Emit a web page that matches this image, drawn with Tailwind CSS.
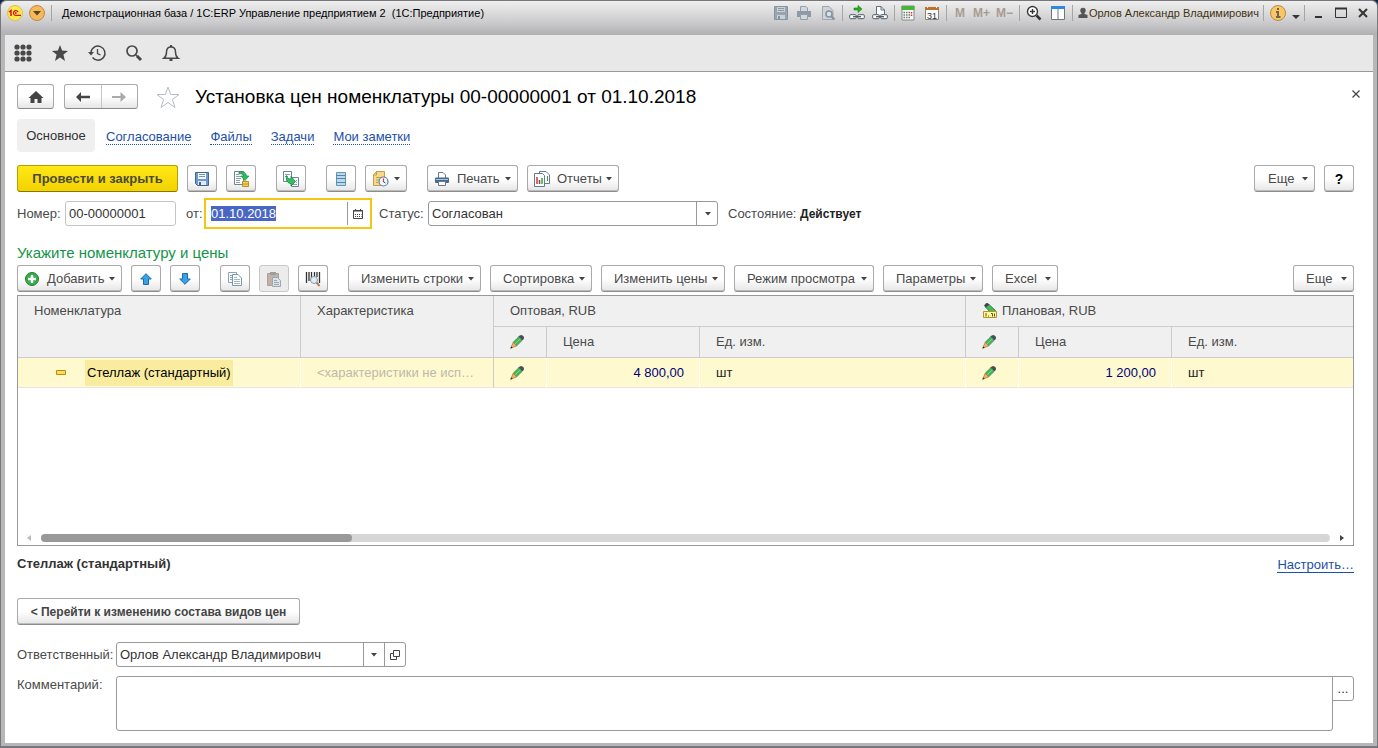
<!DOCTYPE html>
<html lang="ru">
<head>
<meta charset="utf-8">
<title>Установка цен номенклатуры</title>
<script src="https://cdn.jsdelivr.net/npm/@tailwindcss/browser@4"></script>
</head>
<body class="bg-[#0c2850] font-['Liberation_Sans',Arial,sans-serif] text-[13px] leading-4 text-[#4a4a4a]">

<svg class="hidden" aria-hidden="true">
  <symbol id="caret" viewBox="0 0 6 4"><path d="M0 0h6L3 3.5z" fill="#444"/></symbol>
  <symbol id="pencil" viewBox="0 0 14 14">
    <path d="M3.200 7.300 9 1.500 12.500 5 6.700 10.800z" fill="#45b85a" stroke="#2f7a40" stroke-width=".7"/>
    <path d="m5 9 5.800-5.800" stroke="#7fd68d" stroke-width="1"/>
    <path d="M9 1.500 10.300.4h1.800l1.500 1.500v1.800L12.500 5z" fill="#474d5c" stroke="#333845" stroke-width=".6"/>
    <path d="M3.200 7.300 6.700 10.800 1.500 13 1 12.500z" fill="#f2b565" stroke="#a06c34" stroke-width=".7"/>
    <path d="M.3 13.700 1.200 11.400 2.600 12.800z" fill="#222"/>
  </symbol>
</svg>

<div class="flex min-h-screen flex-col rounded-t-md border border-b-2 border-[#77777c] bg-[#b7b7ba]">

  <!-- Window title bar -->
  <header class="flex h-[34px] items-start rounded-t-md bg-linear-to-b from-[#efefef] via-[#cdcdcf] via-60% to-[#b0b0b2] pl-1.5 pr-2 text-[11px] text-black">
    <div class="flex h-6 w-full items-center">
      <svg class="size-4 shrink-0" viewBox="0 0 16 16"><circle cx="8" cy="8" r="7.500" fill="#ffe94d" stroke="#dfbd55"/><path d="M2 7 4 5.500V11" fill="none" stroke="#d8131c" stroke-width="1.500"/><path d="M11 7A2.400 2.400 0 1 0 8.700 10.400H14" fill="none" stroke="#d8131c" stroke-width="1.300"/><circle cx="8.800" cy="8" r=".9" fill="#d8131c"/></svg>
      <button class="ml-1.5 shrink-0" aria-label="Главное меню"><svg class="size-4" viewBox="0 0 16 16"><circle cx="8" cy="8" r="7.500" fill="#f6b95a" stroke="#b98a48"/><path d="M4 6h8L8 10.500z" fill="#5a4526"/></svg></button>
      <span class="ml-1.5 h-4 w-px bg-[#a5a5a5]"></span>
      <h1 class="ml-2.5 whitespace-pre">Демонстрационная база / 1С:ERP Управление предприятием 2  (1С:Предприятие)</h1>

      <div class="ml-auto flex shrink-0 items-center">
        <button aria-label="Сохранить"><svg class="size-4" viewBox="0 0 16 16"><path d="M1.500 1.500h13v13h-13z" fill="#98a5b0" stroke="#8794a0"/><path d="M4 2h8v5H4zM4 10h8v4H4z" fill="#c9d0d6"/><path d="M5 3.500h6M5 5.500h6" stroke="#8d9aa5"/><path d="M5 11h2v3H5z" fill="#8392a0"/></svg></button>
        <button class="ml-[7px]" aria-label="Печать"><svg class="size-4" viewBox="0 0 16 16"><path d="M4.500 6V1.500H10L11.500 3v3" fill="#d5d8db" stroke="#93a0ab"/><path d="M1 6h14v6H1z" fill="#8b9aa6"/><path d="M4.500 9.500h7v5h-7z" fill="#d5d8db" stroke="#93a0ab"/></svg></button>
        <button class="ml-2" aria-label="Предварительный просмотр"><svg class="size-4" viewBox="0 0 16 16"><path d="M2.500 1.500H9l4 4v9H2.500z" fill="#cfd3d7" stroke="#9ca7b0"/><circle cx="9" cy="9" r="3" fill="#dbe2e7" stroke="#8492a0" stroke-width="1.500"/><path d="m11 11 3.500 3.500" stroke="#8492a0" stroke-width="2"/></svg></button>
        <span class="ml-1.5 h-4 w-px bg-[#a5a5a5]"></span>
        <button class="ml-1.5" aria-label="Получить ссылку"><svg class="size-4" viewBox="0 0 16 16"><path d="M5 3h4V.5L13 4 9 7.500V5H5z" fill="#27b01c" stroke="#178010" stroke-width=".6"/><rect x=".7" y="9.700" width="6.500" height="4" rx="1" fill="#fff" stroke="#4c5966"/><rect x="8.800" y="9.700" width="6.500" height="4" rx="1" fill="#fff" stroke="#4c5966"/><path d="M4 11.700h8" stroke="#4c5966" stroke-width="1.300"/></svg></button>
        <button class="ml-[7px]" aria-label="Перейти по ссылке"><svg class="size-4" viewBox="0 0 16 16"><path d="M4.500 9V1.500H9L12.500 5v4" fill="#fff" stroke="#5c6f80"/><path d="M9 1.500V5h3.500" fill="none" stroke="#5c6f80"/><rect x=".7" y="9.700" width="6.500" height="4" rx="1" fill="#fff" stroke="#4c5966"/><rect x="8.800" y="9.700" width="6.500" height="4" rx="1" fill="#fff" stroke="#4c5966"/><path d="M4 11.700h8" stroke="#4c5966" stroke-width="1.300"/></svg></button>
        <span class="ml-1.5 h-4 w-px bg-[#a5a5a5]"></span>
        <button class="ml-[5px]" aria-label="Калькулятор"><svg class="size-4" viewBox="0 0 16 16"><path d="M2 1h12v14H2z" fill="#f8f8f8" stroke="#888"/><path d="M1.500 1h13v4h-13z" fill="#48b53a"/><path d="M3.500 7.500h7M3.500 10h7M3.500 12.500h7" stroke="#66806a" stroke-width="1.500" stroke-dasharray="1.500 1"/><path d="M11.500 7v1.500m0 1V11" stroke="#e03030" stroke-width="1.500"/></svg></button>
        <button class="ml-2" aria-label="Календарь"><svg class="size-4" viewBox="0 0 16 16"><path d="M1.500 2.500h13v12h-13z" fill="#fbfbfb" stroke="#8c8880"/><path d="M1 2h14v3H1z" fill="#b9742f"/><path d="M3.500 1v2m9-2v2" stroke="#eee"/><text x="8" y="13.500" text-anchor="middle" font-family="Liberation Sans" font-size="9" fill="#333">31</text></svg></button>
        <span class="ml-1.5 h-4 w-px bg-[#a5a5a5]"></span>
        <button class="ml-2 text-xs font-bold text-[#a89c90]">M</button>
        <button class="ml-2 text-xs font-bold text-[#a89c90]">M+</button>
        <button class="ml-1.5 text-xs font-bold text-[#a89c90]">M−</button>
        <span class="ml-1.5 h-4 w-px bg-[#a5a5a5]"></span>
        <button class="ml-1.5" aria-label="Масштаб"><svg class="size-4" viewBox="0 0 16 16"><circle cx="6.500" cy="6.500" r="5" fill="#fff" stroke="#3b3b3b" stroke-width="1.400"/><path d="M6.500 4v5M4 6.500h5" stroke="#333" stroke-width="1.300"/><path d="m10.500 10.500 4 4" stroke="#333" stroke-width="2.500"/></svg></button>
        <button class="ml-2" aria-label="Панели"><svg class="size-4" viewBox="0 0 16 16"><path d="M1.500 1.500h13v13h-13zM8 3v11" fill="#fff" stroke="#6d7680"/><path d="M1 1h14v3H1z" fill="#2d8ae0"/></svg></button>
        <span class="ml-1.5 h-4 w-px bg-[#a5a5a5]"></span>
        <button class="ml-1 flex items-center text-[#3f330f]"><svg class="size-3" viewBox="0 0 12 12"><circle cx="6" cy="3.500" r="2.700" fill="#555"/><path d="M4.500 5h3v2l3 1v3h-9V8l3-1z" fill="#555"/></svg>Орлов Александр Владимирович</button>
        <span class="ml-1 h-4 w-px bg-[#a5a5a5]"></span>
        <button class="ml-1.5" aria-label="Справка"><svg class="size-4" viewBox="0 0 16 16"><circle cx="8" cy="8" r="7.500" fill="#fbc765" stroke="#b98a48"/><path d="M8 3v2M6 7h2v5m-2 0h4.500" fill="none" stroke="#6c6658" stroke-width="2"/></svg></button>
        <button class="mt-2 ml-1.5" aria-label="Ещё"><svg class="h-1 w-2" viewBox="0 0 8 4"><path d="M0 0h8L4 4z" fill="#333"/></svg></button>
        <span class="ml-1 h-4 w-px bg-[#a5a5a5]"></span>
        <button class="ml-2" aria-label="Свернуть"><svg class="size-3" viewBox="0 0 12 12"><path d="M2 10h7" stroke="#333" stroke-width="2"/></svg></button>
        <button class="ml-2.5" aria-label="Развернуть"><svg class="size-3" viewBox="0 0 12 12"><path d="M.5 1.500h11v9H.5z" fill="none" stroke="#333"/><path d="M0 1.500h12" stroke="#333" stroke-width="2"/></svg></button>
        <button class="ml-2.5" aria-label="Закрыть"><svg class="size-3" viewBox="0 0 12 12"><path d="m2 2 8 8m0-8-8 8" stroke="#333" stroke-width="2"/></svg></button>
      </div>
    </div>
  </header>

  <div class="mx-1 mb-[3px] flex flex-1 flex-col bg-white">
    <!-- Tools panel -->
    <nav class="flex h-[37px] items-center gap-[17px] border-b border-[#999] bg-[#e8e8e8] pl-2 text-[#484848]">
      <button aria-label="Меню"><svg class="size-5" viewBox="0 0 20 20" fill="currentColor"><circle cx="4" cy="4" r="2.600"/><circle cx="10" cy="4" r="2.600"/><circle cx="16" cy="4" r="2.600"/><circle cx="4" cy="10" r="2.600"/><circle cx="10" cy="10" r="2.600"/><circle cx="16" cy="10" r="2.600"/><circle cx="4" cy="16" r="2.600"/><circle cx="10" cy="16" r="2.600"/><circle cx="16" cy="16" r="2.600"/></svg></button>
      <button aria-label="Избранное"><svg class="size-5" viewBox="0 0 20 20"><path d="m10 2 2.100 5.600 6 .3-4.700 3.700L15 18l-5-3.400L5 18l1.600-6.400L1.900 7.900l6-.3z" fill="currentColor"/></svg></button>
      <button aria-label="История"><svg class="size-5" viewBox="0 0 20 20" fill="none" stroke="currentColor"><path d="M4 9.500a7 7 0 1 1 1.500 5" stroke-width="1.500"/><path d="M1 9h6l-3 3.500z" fill="currentColor" stroke="none"/><path d="M10.500 6v4.500l3 1.500" stroke-width="1.300"/></svg></button>
      <button aria-label="Поиск"><svg class="size-5" viewBox="0 0 20 20" fill="none" stroke="currentColor"><circle cx="8" cy="8" r="5" stroke-width="1.700"/><path d="m12 12 1.500 1.500" stroke-width="1.500"/><path d="m13 13 4 4" stroke-width="3"/></svg></button>
      <button aria-label="Оповещения"><svg class="size-5" viewBox="0 0 20 20" fill="none" stroke="currentColor" stroke-width="1.500"><path d="M3 15.200c2-1.400 2.500-3 2.500-6.200C5.500 6 7 4 10 4s4.500 2 4.500 5c0 3.200.5 4.800 2.500 6.200z"/><path d="M10 2v2M8.500 17h3" stroke-width="2"/></svg></button>
    </nav>

    <main class="flex flex-1 flex-col pl-3 pr-[19px] pb-3">
      <!-- Form title -->
      <div class="mt-3 flex h-[25px] items-center">
        <button class="flex h-[25px] w-[37px] items-center justify-center rounded-[3px] border border-[#aaa] border-b-[#8a8a8a] bg-linear-to-b from-white from-50% to-[#e6e6e6]" aria-label="Домой"><svg class="h-3 w-4" viewBox="0 0 16 12"><path d="M8 0 15.500 7H13.500v5H9.500V8H6.500v4H2.500V7H.5z" fill="#444"/></svg></button>
        <div class="ml-2.5 flex h-[25px] w-[74px] rounded-[3px] border border-[#aaa] border-b-[#8a8a8a] bg-linear-to-b from-white from-50% to-[#e6e6e6]">
          <button class="flex flex-1 items-center justify-center border-r border-[#c4c4c4]" aria-label="Назад"><svg class="h-2.5 w-4" viewBox="0 0 16 10"><path d="M1 5 6 0v3.700h9v2.600H6V10z" fill="#444"/></svg></button>
          <button class="flex flex-1 items-center justify-center" aria-label="Вперёд"><svg class="h-2.5 w-4" viewBox="0 0 16 10"><path d="M15 5 9.500 0v4H1v2h8.500v4z" fill="#aaa"/></svg></button>
        </div>
        <button class="ml-[18px]" aria-label="В избранное"><svg class="size-6" viewBox="0 0 24 24"><path d="m12 2 2.700 7.500h8.300l-6.600 5L19 22.500l-7-5-7 5 2.600-8L1 9.500h8.300z" fill="#fff" stroke="#b5bcc2"/></svg></button>
        <h2 class="ml-[15px] text-[19px] leading-6 text-black">Установка цен номенклатуры 00-00000001 от 01.10.2018</h2>
        <button class="mr-[-8px] mb-1.5 ml-auto" aria-label="Закрыть форму"><svg class="size-3" viewBox="0 0 12 12"><path d="m2.500 2.500 7 7m0-7-7 7" stroke="#444" stroke-width="1.200"/></svg></button>
      </div>

      <!-- Sections -->
      <nav class="mt-2.5 flex h-[33px] items-center gap-[19px]">
        <a href="#" class="-mr-2 flex h-[33px] w-[78px] items-center justify-center rounded bg-[#efefef] pt-px text-[#333]">Основное</a>
        <a href="#" class="mt-0.5 border-b border-dotted border-[#1d4fa8] leading-[15px] text-[#1d4fa8]">Согласование</a>
        <a href="#" class="mt-0.5 border-b border-dotted border-[#1d4fa8] leading-[15px] text-[#1d4fa8]">Файлы</a>
        <a href="#" class="mt-0.5 border-b border-dotted border-[#1d4fa8] leading-[15px] text-[#1d4fa8]">Задачи</a>
        <a href="#" class="mt-0.5 border-b border-dotted border-[#1d4fa8] leading-[15px] text-[#1d4fa8]">Мои заметки</a>
      </nav>

      <!-- Document commands -->
      <div class="mt-[13px] flex h-[27px] items-stretch gap-[9px] *:shrink-0">
        <button class="w-[161px] rounded-[3px] border border-[#b5a000] border-b-[#857600] bg-linear-to-b from-[#ffe815] to-[#f2d200] font-bold text-[#4a4a3a]">Провести и закрыть</button>
        <button class="flex w-[30px] items-center justify-center rounded-[3px] border border-[#aaa] border-b-[#8c8c8c] bg-linear-to-b from-white from-50% to-[#e6e6e6] shadow-[inset_0_-1px_0_#bcbcbc]" aria-label="Записать"><svg class="size-4" viewBox="0 0 16 16"><path d="M1.500 1.500h13v13h-11l-2-2z" fill="#6b9bd0" stroke="#43648c"/><path d="M4 2h8v6H4z" fill="#f4f8fc"/><path d="M5 3.500h6M5 5.500h6" stroke="#7f93ab"/><path d="M4 10h8v4H4z" fill="#e6e9ee"/><path d="M5 11h2v3H5z" fill="#43648c"/></svg></button>
        <button class="flex w-[30px] items-center justify-center rounded-[3px] border border-[#aaa] border-b-[#8c8c8c] bg-linear-to-b from-white from-50% to-[#e6e6e6] shadow-[inset_0_-1px_0_#bcbcbc]" aria-label="Провести"><svg class="size-[18px]" viewBox="0 0 18 18"><path d="M2.500 1.500h9v13h-9z" fill="#fff" stroke="#6d8597"/><path d="M4 4.500h3m-3 2h5m-5 2h5m-5 2h4m-4 2h4" stroke="#88a0b0"/><path d="M7 2c4-1 7 0 7.500 4H17l-4 4.500L9 6h2.500C11 4 9.500 3.500 7 4z" fill="#2fb960" stroke="#1a8a42" stroke-width=".7"/><path d="M10.500 11.500h6v5h-6z" fill="#f6d34c" stroke="#b8902a"/><path d="M10.500 14h6" stroke="#b8902a"/></svg></button>
        <button class="ml-[11px] flex w-[30px] items-center justify-center rounded-[3px] border border-[#aaa] border-b-[#8c8c8c] bg-linear-to-b from-white from-50% to-[#e6e6e6] shadow-[inset_0_-1px_0_#bcbcbc]" aria-label="Создать на основании"><svg class="size-[18px]" viewBox="0 0 18 18"><path d="M1.500 1.500h8v10h-8zM9.500 7.500h7v9h-7z" fill="#fff" stroke="#6d8597"/><path d="M3 4.500h5m-5 2h3m8 4h1m-1 2h1m-4 2h4" stroke="#88a0b0"/><path d="M4.500 5.500c.5 2.500 2 3.500 4.500 3.500V6.500l4.500 5-4.500 4.500v-2.500C5.500 13.500 3.500 10 4.500 5.500z" fill="#2fc068" stroke="#15853e" stroke-width=".8"/></svg></button>
        <button class="ml-[11px] flex w-[30px] items-center justify-center rounded-[3px] border border-[#aaa] border-b-[#8c8c8c] bg-linear-to-b from-white from-50% to-[#e6e6e6] shadow-[inset_0_-1px_0_#bcbcbc]" aria-label="Список"><svg class="size-4" viewBox="0 0 16 16"><path d="M3.500 1.500h9v13h-9z" fill="#b9d9ec" stroke="#6694b4"/><path d="M3 4.500h10M3 7.500h10M3 11.500h10" stroke="#5585a8"/></svg></button>
        <button class="flex w-[42px] items-center rounded-[3px] border border-[#aaa] border-b-[#8c8c8c] bg-linear-to-b from-white from-50% to-[#e6e6e6] px-1.5 shadow-[inset_0_-1px_0_#bcbcbc]" aria-label="Напоминание"><svg class="size-[18px]" viewBox="0 0 18 18"><path d="M4.500 1.500h8v14h-11V5z" fill="#f7d98c" stroke="#c69c48"/><path d="M1.500 5h3V1.500M4 7.500h5M4 10h3M4 12.500h2" fill="none" stroke="#c69c48"/><circle cx="11.500" cy="11.500" r="4.500" fill="#f4f8fc" stroke="#5a7fa8" stroke-width="1.200"/><path d="M11.500 8.500v3.500" stroke="#d33" stroke-width="1.200"/><path d="m11.500 12 2 1" stroke="#456"/></svg><svg class="ml-auto h-1 w-1.5"><use href="#caret"/></svg></button>
        <button class="ml-[11px] flex w-[91px] items-center rounded-[3px] border border-[#aaa] border-b-[#8c8c8c] bg-linear-to-b from-white from-50% to-[#e6e6e6] px-1.5 shadow-[inset_0_-1px_0_#bcbcbc]"><svg class="mr-[7px] size-4" viewBox="0 0 16 16"><path d="M4.500 7V1.500H9L11.500 4v3" fill="#fff" stroke="#68798a"/><rect x="1" y="6.500" width="14" height="5.500" rx="1" fill="#47698c"/><path d="M2 8.500h12" stroke="#a8c4de"/><path d="M4.500 10.500h7v4h-7z" fill="#fff" stroke="#68798a"/></svg>Печать<svg class="ml-auto h-1 w-1.5"><use href="#caret"/></svg></button>
        <button class="flex w-[92px] items-center rounded-[3px] border border-[#aaa] border-b-[#8c8c8c] bg-linear-to-b from-white from-50% to-[#e6e6e6] px-1.5 shadow-[inset_0_-1px_0_#bcbcbc]"><svg class="mr-[7px] size-4" viewBox="0 0 16 16"><path d="M5.500.5H12L15.500 4v8.500h-10z" fill="#fff" stroke="#68798a"/><path d="M13.500 5v5" stroke="#3a9d3a"/><path d="M.5 2.500h8l2 2v11H.5z" fill="#fff" stroke="#68798a"/><path d="M3 6v7" stroke="#d33" stroke-width="1.500"/><path d="M5.500 9v4" stroke="#555" stroke-width="1.500"/><path d="M8 7v6" stroke="#39a339" stroke-width="1.500"/></svg>Отчеты<svg class="ml-auto h-1 w-1.5"><use href="#caret"/></svg></button>
        <button class="ml-auto flex w-[61px] items-center rounded-[3px] border border-[#aaa] border-b-[#8c8c8c] bg-linear-to-b from-white from-50% to-[#e6e6e6] pl-[13px] pr-1.5 shadow-[inset_0_-1px_0_#bcbcbc]">Еще<svg class="ml-auto h-1 w-1.5"><use href="#caret"/></svg></button>
        <button class="w-[30px] rounded-[3px] border border-[#aaa] border-b-[#8c8c8c] bg-linear-to-b from-white from-50% to-[#e6e6e6] text-sm font-bold text-black shadow-[inset_0_-1px_0_#bcbcbc]">?</button>
      </div>

      <!-- Document header fields -->
      <div class="mt-[6px] flex h-[31px] items-center">
        <label for="number" class="w-12">Номер:</label>
        <input id="number" value="00-00000001" class="h-[25px] w-[111px] rounded-[3px] border border-[#c4c4c4] px-[3px] text-[#333]">
        <label for="date" class="ml-2.5 w-[18px]">от:</label>
        <div class="flex h-[31px] w-[168px] items-center border-2 border-[#f3c614] bg-white">
          <input id="date" value="01.10.2018" autofocus class="h-[25px] w-0 flex-1 pl-[5px] text-[#333] outline-none selection:bg-[#4a66c4] selection:text-white">
          <button class="flex h-[23px] w-[23px] items-center justify-center border-l border-[#999] pr-[3px]" aria-label="Выбрать дату"><svg class="size-[10px]" viewBox="0 0 10 10"><path d="M.5 1.500h9v8h-9z" fill="#fff" stroke="#444"/><path d="M0 2h10M2.500 0v2m5-2v2" stroke="#444"/><path d="M2 5.500h6.500M2 7.500h6.500" stroke="#444" stroke-dasharray="1 1"/></svg></button>
        </div>
        <label for="status" class="ml-[7px] w-[49px]">Статус:</label>
        <div class="relative flex w-[290px]">
          <select id="status" class="h-[25px] w-full appearance-none rounded-[3px] border border-[#999] bg-white px-[3px] text-[#333]"><option>Согласован</option></select>
          <span class="pointer-events-none absolute inset-y-0 right-0 flex w-[22px] items-center justify-center border-l border-[#999]"><svg class="h-1 w-1.5"><use href="#caret"/></svg></span>
        </div>
        <span class="ml-2.5 w-[72px]">Состояние:</span>
        <span class="text-xs font-bold text-[#222]">Действует</span>
      </div>

      <h3 class="mt-[14px] text-[15px] leading-5 text-[#159447]">Укажите номенклатуру и цены</h3>

      <!-- Table commands -->
      <div class="mt-0.5 flex h-[27px] items-stretch gap-[9px] *:shrink-0">
        <button class="flex w-[105px] items-center rounded-[3px] border border-[#aaa] border-b-[#8c8c8c] bg-linear-to-b from-white from-50% to-[#e6e6e6] px-1.5 shadow-[inset_0_-1px_0_#bcbcbc]"><svg class="mr-[7px] size-4" viewBox="0 0 16 16"><circle cx="8" cy="8" r="6.500" fill="#35ae49" stroke="#1f7d32"/><path d="M8 4v8M4 8h8" stroke="#fff" stroke-width="2.400"/></svg>Добавить<svg class="ml-auto h-1 w-1.5"><use href="#caret"/></svg></button>
        <button class="flex w-[30px] items-center justify-center rounded-[3px] border border-[#aaa] border-b-[#8c8c8c] bg-linear-to-b from-white from-50% to-[#e6e6e6] shadow-[inset_0_-1px_0_#bcbcbc]" aria-label="Вверх"><svg class="size-3" viewBox="0 0 12 12"><path d="M6 .7 11.300 6H8.500v5.500h-5V6H.7z" fill="#37a0e6" stroke="#1c6ca8"/></svg></button>
        <button class="flex w-[30px] items-center justify-center rounded-[3px] border border-[#aaa] border-b-[#8c8c8c] bg-linear-to-b from-white from-50% to-[#e6e6e6] shadow-[inset_0_-1px_0_#bcbcbc]" aria-label="Вниз"><svg class="size-3" viewBox="0 0 12 12"><path d="M6 11.300.7 6h2.800V.5h5V6h2.800z" fill="#37a0e6" stroke="#1c6ca8"/></svg></button>
        <button class="ml-[11px] flex w-[30px] items-center justify-center rounded-[3px] border border-[#aaa] border-b-[#8c8c8c] bg-linear-to-b from-white from-50% to-[#e6e6e6] shadow-[inset_0_-1px_0_#bcbcbc]" aria-label="Копировать"><svg class="size-4" viewBox="0 0 16 16"><path d="M1.500 1.500h8v10h-8z" fill="#fff" stroke="#8aa5ba"/><path d="M3 4.500h2m-2 2h2m-2 2h2" stroke="#8aa5ba"/><path d="M5.500 3.500H11L14.500 7v7.500h-9z" fill="#fff" stroke="#7896ae"/><path d="M7 6.500h3m-3 2h6m-6 2h6m-6 2h6" stroke="#9fb6c8"/></svg></button>
        <button class="flex w-[30px] items-center justify-center rounded-[3px] border border-[#c8c8c8] bg-[#ececec]" aria-label="Вставить"><svg class="size-4" viewBox="0 0 16 16"><path d="M1.500 2.500h11v12h-11z" fill="#c3b2a4" stroke="#ada094"/><path d="M4 1h6v3H4z" fill="#9a9da1"/><path d="M6.500 6.500h5l3 3v6h-8z" fill="#dde3e8" stroke="#9aa8b4"/><path d="M8 9.500h3m-3 2h5m-5 2h5" stroke="#9aa8b4"/></svg></button>
        <button class="flex w-[30px] items-center justify-center rounded-[3px] border border-[#aaa] border-b-[#8c8c8c] bg-linear-to-b from-white from-50% to-[#e6e6e6] shadow-[inset_0_-1px_0_#bcbcbc]" aria-label="Поиск по штрихкоду"><svg class="size-4" viewBox="0 0 16 16"><path d="M1.500 1v11M4 1v9M6.500 1v9M9.500 1v5M12 1v5M14.500 1v11" stroke="#333" stroke-width="1.300"/><circle cx="9" cy="9" r="3.500" fill="#dcecf8" stroke="#8d99a5"/><path d="m11.500 11.500 3 3.500" stroke="#b5805a" stroke-width="2"/></svg></button>
        <button class="ml-[11px] flex w-[133px] items-center rounded-[3px] border border-[#aaa] border-b-[#8c8c8c] bg-linear-to-b from-white from-50% to-[#e6e6e6] pl-3 pr-1.5 shadow-[inset_0_-1px_0_#bcbcbc]">Изменить строки<svg class="ml-auto h-1 w-1.5"><use href="#caret"/></svg></button>
        <button class="flex w-[102px] items-center rounded-[3px] border border-[#aaa] border-b-[#8c8c8c] bg-linear-to-b from-white from-50% to-[#e6e6e6] pl-3 pr-1.5 shadow-[inset_0_-1px_0_#bcbcbc]">Сортировка<svg class="ml-auto h-1 w-1.5"><use href="#caret"/></svg></button>
        <button class="flex w-[124px] items-center rounded-[3px] border border-[#aaa] border-b-[#8c8c8c] bg-linear-to-b from-white from-50% to-[#e6e6e6] pl-3 pr-1.5 shadow-[inset_0_-1px_0_#bcbcbc]">Изменить цены<svg class="ml-auto h-1 w-1.5"><use href="#caret"/></svg></button>
        <button class="flex w-[140px] items-center rounded-[3px] border border-[#aaa] border-b-[#8c8c8c] bg-linear-to-b from-white from-50% to-[#e6e6e6] pl-3 pr-1.5 shadow-[inset_0_-1px_0_#bcbcbc]">Режим просмотра<svg class="ml-auto h-1 w-1.5"><use href="#caret"/></svg></button>
        <button class="flex w-[100px] items-center rounded-[3px] border border-[#aaa] border-b-[#8c8c8c] bg-linear-to-b from-white from-50% to-[#e6e6e6] pl-3 pr-1.5 shadow-[inset_0_-1px_0_#bcbcbc]">Параметры<svg class="ml-auto h-1 w-1.5"><use href="#caret"/></svg></button>
        <button class="flex w-[66px] items-center rounded-[3px] border border-[#aaa] border-b-[#8c8c8c] bg-linear-to-b from-white from-50% to-[#e6e6e6] pl-3 pr-1.5 shadow-[inset_0_-1px_0_#bcbcbc]">Excel<svg class="ml-auto h-1 w-1.5"><use href="#caret"/></svg></button>
        <button class="ml-auto flex w-[61px] items-center rounded-[3px] border border-[#aaa] border-b-[#8c8c8c] bg-linear-to-b from-white from-50% to-[#e6e6e6] pl-3 pr-1.5 shadow-[inset_0_-1px_0_#bcbcbc]">Еще<svg class="ml-auto h-1 w-1.5"><use href="#caret"/></svg></button>
      </div>

      <!-- Price table -->
      <div class="mt-[3px] flex min-h-[251px] flex-1 flex-col border border-[#999]">
        <table class="w-full table-fixed border-separate border-spacing-0 text-left">
          <colgroup><col class="w-[283px]"><col class="w-[193px]"><col class="w-[53px]"><col class="w-[153px]"><col class="w-[266px]"><col class="w-[53px]"><col class="w-[153px]"><col></colgroup>
          <thead class="bg-[#f0f0f0] *:*:border-b *:*:border-[#ccc] *:*:font-normal">
            <tr class="h-[31px]">
              <th rowspan="2" class="border-r px-4 pt-[7px] align-top">Номенклатура</th>
              <th rowspan="2" class="border-r px-4 pt-[7px] align-top">Характеристика</th>
              <th colspan="3" class="border-r px-4">Оптовая, RUB</th>
              <th colspan="3" class="px-4"><span class="flex items-center gap-1"><svg class="size-4" viewBox="0 0 16 16"><path d="M3.500 4 7 1.500l6.500 6L12 9.500 8 9z" fill="#45b85a" stroke="#2b6b39" stroke-width=".8"/><path d="M2.500 2.500 4 .5h2L7 1.500 3.500 4z" fill="#3d4350" stroke="#333" stroke-width=".6"/><path d="M1.500 8.500h13v6h-13z" fill="#fff6a0" stroke="#b39425"/><path d="M4 10v3.500M6.500 12.500v1M9 10.500h1.500v3M12.500 10.500v3" fill="none" stroke="#6b5510"/></svg>Плановая, RUB</span></th>
            </tr>
            <tr class="h-[31px]">
              <th class="border-r px-4"><svg class="size-3.5" role="img" aria-label="Изменено"><use href="#pencil"/></svg></th>
              <th class="border-r px-4">Цена</th>
              <th class="border-r px-4">Ед. изм.</th>
              <th class="border-r px-4"><svg class="size-3.5" role="img" aria-label="Изменено"><use href="#pencil"/></svg></th>
              <th class="border-r px-4">Цена</th>
              <th class="px-4">Ед. изм.</th>
            </tr>
          </thead>
          <tbody>
            <tr class="h-[30px] bg-[#fef9cf] text-[#222] *:border-b *:border-b-[#e5e5e5]">
              <td class="border-r border-r-white pl-[38px]"><div class="flex items-center"><svg class="h-[5px] w-[10px]" viewBox="0 0 10 5"><path d="M.5.5h9v4h-9z" fill="#ffdc50" stroke="#b98c1a"/></svg><span class="ml-[19px] bg-[#f9ec9f] px-0.5 py-[5px] text-black">Стеллаж (стандартный)</span></div></td>
              <td class="truncate border-r border-r-[#ccc] px-4 text-[#bdb9ab]">&lt;характеристики не исп…</td>
              <td class="border-r border-r-white px-4"><svg class="size-3.5"><use href="#pencil"/></svg></td>
              <td class="border-r border-r-white px-[15px] text-right text-[#00007a]">4 800,00</td>
              <td class="border-r border-r-white px-4">шт</td>
              <td class="border-r border-r-white px-4"><svg class="size-3.5"><use href="#pencil"/></svg></td>
              <td class="border-r border-r-white px-[15px] text-right text-[#00007a]">1 200,00</td>
              <td class="px-4">шт</td>
            </tr>
          </tbody>
        </table>
        <div class="mt-auto flex h-[14px] items-center justify-between px-[9px]">
          <svg class="h-1.5 w-1" viewBox="0 0 4 6"><path d="M4 0v6L0 3z" fill="#bbb"/></svg>
          <div class="ml-2.5 h-2 flex-1 rounded-full bg-[#d6d6d6]"><div class="h-2 w-[311px] rounded-full bg-[#999]"></div></div>
          <svg class="ml-2.5 h-1.5 w-1" viewBox="0 0 4 6"><path d="M0 0v6l4-3z" fill="#444"/></svg>
        </div>
      </div>

      <div class="mt-2.5 flex h-[17px] items-start justify-between">
        <strong class="text-[#333]">Стеллаж (стандартный)</strong>
        <a href="#" class="mt-px border-b border-[#1d4fa8] leading-[15px] text-[#1d4fa8]">Настроить…</a>
      </div>

      <button class="mt-[25px] h-[27px] w-[283px] rounded-[3px] border border-[#aaa] border-b-[#8c8c8c] bg-linear-to-b from-white from-50% to-[#e6e6e6] text-xs font-bold text-[#444] shadow-[inset_0_-1px_0_#bcbcbc]">&lt; Перейти к изменению состава видов цен</button>

      <div class="mt-[17px] flex items-center">
        <label for="owner" class="w-[99px]">Ответственный:</label>
        <div class="flex h-[25px] w-[290px] rounded-[3px] border border-[#999]">
          <input id="owner" value="Орлов Александр Владимирович" class="w-0 flex-1 px-[3px] text-[#333]">
          <button class="flex w-[21px] items-center justify-center border-l border-[#999]" aria-label="Выбрать"><svg class="h-1 w-1.5"><use href="#caret"/></svg></button>
          <button class="flex w-[21px] items-center justify-center border-l border-[#999]" aria-label="Открыть"><svg class="size-[10px]" viewBox="0 0 10 10"><path d="M3.500.5h6v6h-6zM3 3.500H.5v6h6V7" fill="none" stroke="#444"/></svg></button>
        </div>
      </div>

      <div class="mt-[9px] flex items-start">
        <label for="comment" class="w-[99px] pt-px">Комментарий:</label>
        <textarea id="comment" class="h-[55px] flex-1 resize-none rounded-[3px] rounded-tr-none border border-[#999] px-[3px] text-[#333]"></textarea>
        <button class="-ml-px h-[25px] w-[22px] rounded-r-[3px] border border-[#999] text-[#333]" aria-label="Открыть комментарий">...</button>
      </div>
    </main>
  </div>
</div>
<script>document.getElementById('date').select();</script>
</body>
</html>
